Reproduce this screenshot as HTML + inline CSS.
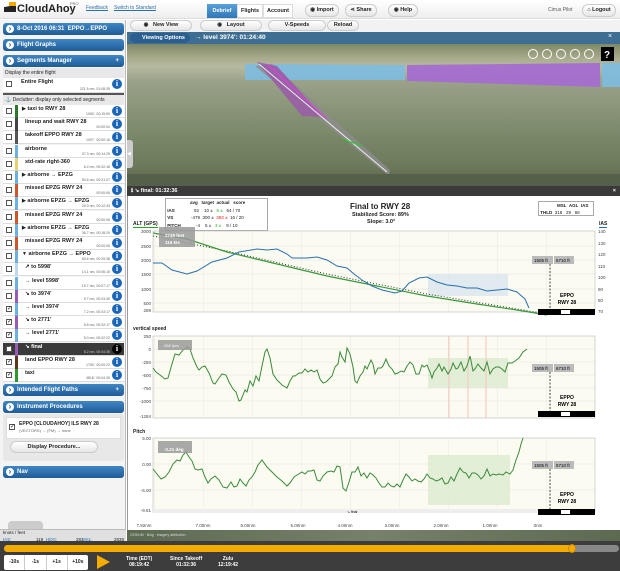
<!DOCTYPE html>
<html><head><meta charset="utf-8"><style>
*{box-sizing:border-box;margin:0;padding:0}
body{width:620px;height:571px;overflow:hidden;background:#fff;font-family:"Liberation Sans",sans-serif;font-size:6px;color:#222;position:relative}
.a{position:absolute}
.bar{position:absolute;left:3px;width:121px;height:12px;border-radius:3px;background:linear-gradient(#3f86c4,#1f5c97);color:#fff;font-weight:bold;font-size:6px;line-height:12px;padding-left:14px}
.bar:before{content:"›";position:absolute;left:3px;top:2px;width:8px;height:8px;border-radius:50%;background:#fff;color:#1f5c97;font-size:8px;line-height:7px;text-align:center}
.row{position:absolute;left:3px;width:121px;height:13px;border-bottom:1px solid #ddd;background:#fff}
.row .cb{position:absolute;left:3px;top:3px;width:6px;height:6px;border:1px solid #555;background:#fff;font-size:6px;line-height:5px}
.row .c{position:absolute;left:12px;top:0;width:3px;height:13px}
.row .t{position:absolute;left:22px;top:1px;font-size:5.5px;font-weight:bold}
.row .s{position:absolute;right:14px;bottom:1px;font-size:3.5px;color:#666}
.row .i{position:absolute;right:2px;top:1px;width:10px;height:10px;border-radius:50%;background:#1a66b8;color:#fff;font:bold 8px "Liberation Serif",serif;text-align:center;line-height:10px}
.btn{position:absolute;height:11px;border:1px solid #ccc;border-radius:6px;background:linear-gradient(#fff,#e6e6e6);font-size:5.5px;font-weight:bold;line-height:9px;text-align:center}
.ax{font-size:4.5px;fill:#444}
</style></head><body>
<div class="a" style="left:0;top:0;width:620px;height:19px;background:linear-gradient(#fff,#eee);border-bottom:1px solid #ddd"></div>
<div class="a" style="left:4px;top:5px;width:12px;height:7px;background:#222;clip-path:polygon(0 30%,100% 0,100% 100%,0 100%)"></div>
<div class="a" style="left:9px;top:2px;width:7px;height:4px;background:#f5a800"></div>
<div class="a" style="left:17px;top:3px;font-size:11px;font-weight:bold;color:#222">CloudAhoy</div>
<div class="a" style="left:70px;top:1px;font-size:4px;color:#666">PRO</div>
<div class="a" style="left:86px;top:5px;font-size:5px;color:#2a6fb0;text-decoration:underline">Feedback</div>
<div class="a" style="left:114px;top:5px;font-size:5px;color:#2a6fb0;text-decoration:underline">Switch to Standard</div>
<div class="a" style="left:207px;top:4px;width:30px;height:14px;background:linear-gradient(#5aa0d8,#2f78b8);color:#fff;font-size:5.5px;font-weight:bold;text-align:center;line-height:14px">Debrief</div>
<div class="a" style="left:237px;top:4px;width:26px;height:14px;background:#fff;border:1px solid #ddd;font-size:5.5px;font-weight:bold;text-align:center;line-height:12px">Flights</div>
<div class="a" style="left:263px;top:4px;width:30px;height:14px;background:#fff;border:1px solid #ddd;font-size:5.5px;font-weight:bold;text-align:center;line-height:12px">Account</div>
<div class="btn" style="left:305px;top:4px;width:34px;height:13px;line-height:11px">◉ Import</div>
<div class="btn" style="left:345px;top:4px;width:32px;height:13px;line-height:11px">⋖ Share</div>
<div class="btn" style="left:388px;top:4px;width:30px;height:13px;line-height:11px">◉ Help</div>
<div class="a" style="left:548px;top:7px;font-size:5px;color:#555">Cirrus Pilot</div>
<div class="btn" style="left:582px;top:4px;width:34px;height:13px;line-height:11px">⌂ Logout</div>
<div class="a" style="left:0;top:20px;width:126px;height:521px;background:#f4f4f4;border-right:1px solid #bbb"></div>
<div class="bar" style="top:23px">8-Oct 2016 06:31 &nbsp;EPPO→EPPO</div>
<div class="bar" style="top:39px">Flight Graphs</div>
<div class="bar" style="top:55px">Segments Manager<span style="position:absolute;right:5px">+</span></div>
<div class="a" style="left:3px;top:68px;width:121px;height:10px;background:#e8e8e8;font-size:5px;padding:2px">Display the entire flight</div>
<div class="row" style="top:78px;height:15px"><div class="cb"></div><div class="t" style="left:18px">Entire Flight</div><div class="s">221.5 nm, 01:08:35</div><div class="i">i</div></div>
<div class="a" style="left:3px;top:93px;width:121px;height:2px;background:#555"></div>
<div class="a" style="left:3px;top:95px;width:121px;height:10px;background:#e8e8e8;font-size:5px;padding:2px">⚓ Declutter: display only selected segments</div>
<div id="rows"></div>
<div class="bar" style="top:384px">Intended Flight Paths<span style="position:absolute;right:5px">+</span></div>
<div class="bar" style="top:401px">Instrument Procedures</div>
<div class="a" style="left:3px;top:414px;width:121px;height:47px;background:#e8e8e8;border-radius:3px"></div>
<div class="a" style="left:6px;top:417px;width:115px;height:22px;background:#fff;border:1px solid #ddd"></div>
<div class="a" style="left:9px;top:424px;width:6px;height:6px;border:1px solid #555;font-size:6px;line-height:5px">✓</div>
<div class="a" style="left:19px;top:421px;font-size:5px;font-weight:bold">EPPO [CLOUDAHOY] ILS RWY 28</div>
<div class="a" style="left:19px;top:428px;font-size:4px;color:#666">(VECTORS) → (FM) → none</div>
<div class="btn" style="left:10px;top:441px;width:88px;height:12px;line-height:10px">Display Procedure...</div>
<div class="bar" style="top:466px">Nav</div>
<div class="a" style="left:8px;top:521px;width:35px;height:8px;background:#ccc;border-radius:4px 4px 0 0"></div>
<div class="a" style="left:0;top:529px;width:126px;height:12px;background:#e0e0e0;border-top:1px solid #bbb"></div>
<div class="a" style="left:3px;top:530px;font-size:4.5px">knots / feet</div>
<div class="a" style="left:3px;top:537px;font-size:4.5px;width:122px"><span style="color:#2a6fb0">IAS:</span><span style="position:absolute;left:33px">119</span><span style="position:absolute;left:43px;color:#2a6fb0">HDG:</span><span style="position:absolute;left:73px">283</span><span style="position:absolute;left:79px;color:#2a6fb0">MSL:</span><span style="position:absolute;left:111px">2838</span></div>
<div class="a" style="left:127px;top:20px;width:493px;height:12px;background:#f2f2f2"></div>
<div class="btn" style="left:130px;top:20px;width:62px">◉ &nbsp;&nbsp;New View</div>
<div class="btn" style="left:200px;top:20px;width:62px">◉ &nbsp;&nbsp;Layout</div>
<div class="btn" style="left:268px;top:20px;width:58px">V-Speeds</div>
<div class="btn" style="left:327px;top:20px;width:32px">Reload</div>
<div class="a" style="left:127px;top:32px;width:493px;height:12px;background:#3e6f92"></div>
<div class="a" style="left:130px;top:33px;width:60px;height:10px;border-radius:5px;background:#2b5f8f;color:#fff;font-size:5.5px;font-weight:bold;line-height:10px;padding-left:12px">Viewing Options</div>
<div class="a" style="left:195px;top:34px;color:#fff;font-size:6.5px;font-weight:bold">→ level 3974': 01:24:40</div>
<div class="a" style="left:608px;top:33px;color:#fff;font-size:7px">×</div>
<div class="a" style="left:127px;top:44px;width:493px;height:142px;background:linear-gradient(#7e8868 0%,#a8ab8c 10%,#b6b99f 16%,#9aa28a 26%,#8a9578 45%,#7a8769 65%,#6d7a5c 85%,#5c6449 100%)"></div>
<svg class="a" style="left:127px;top:44px" width="493" height="142">
<polygon points="118,20 278,21 278,36 118,36" fill="#7dbce0" opacity=".9"/>
<polygon points="280,21 473,19 473,43 280,37" fill="#a56bd0" opacity=".92"/>
<polygon points="475,19 493,19 493,43 475,43" fill="#7dbce0" opacity=".9"/>
<polygon points="128,22 145,20 263,126 262,132" fill="#8c8c8c" opacity=".85"/>
<polygon points="130,18 150,22 196,73 175,72" fill="#9a5ba8" opacity=".85"/>
<line x1="132" y1="20" x2="260" y2="128" stroke="#eee" stroke-width="1"/>
<line x1="140" y1="20" x2="200" y2="75" stroke="#e040e0" stroke-width="1"/>
<line x1="215" y1="95" x2="235" y2="102" stroke="#2c2" stroke-width="1"/>
<g fill="none" stroke="#fff" stroke-width="1"><circle cx="406" cy="10" r="4.5"/><circle cx="420" cy="10" r="4.5"/><circle cx="434" cy="10" r="4.5"/><circle cx="448" cy="10" r="4.5"/><circle cx="462" cy="10" r="4.5"/></g>
<rect x="474" y="3" width="13" height="14" fill="#000"/><text x="477" y="14" fill="#fff" font-size="10" font-weight="bold">?</text>
<rect x="0" y="130" width="493" height="12" fill="#55604a"/>
</svg>
<div class="a" style="left:127px;top:186px;width:493px;height:10px;background:#3a3a3a;color:#fff;font-size:5.5px;font-weight:bold;line-height:10px;padding-left:4px">ℹ ↘ final: 01:32:36<span style="position:absolute;right:4px">×</span></div>
<div class="a" style="left:127px;top:196px;width:493px;height:334px;background:#fff;border-left:1px solid #999"></div>
<div class="a" style="left:165px;top:198px;width:103px;height:33px;border:1px solid #aaa;font-size:4.5px;line-height:7.5px">
<div style="padding-left:24px;font-weight:bold">avg &nbsp;&nbsp;target &nbsp;actual &nbsp;&nbsp;score</div>
<div><b>&nbsp;IAS</b><span style="position:absolute;left:28px">92 &nbsp;&nbsp;&nbsp;10 ± &nbsp;&nbsp;<span style="color:#2a2">6 ±</span> &nbsp;&nbsp;64 / 70</span></div>
<div><b>&nbsp;VS</b><span style="position:absolute;left:25px">-479 &nbsp;300 ± &nbsp;<span style="color:#d22">393 ±</span> &nbsp;16 / 20</span></div>
<div><b>&nbsp;PITCH</b><span style="position:absolute;left:30px">-4 &nbsp;&nbsp;&nbsp;5 ± &nbsp;&nbsp;<span style="color:#2a2">3 ±</span> &nbsp;&nbsp;&nbsp;9 / 10</span></div>
</div>
<div class="a" style="left:350px;top:202px;font-size:8px;font-weight:bold">Final to RWY 28</div>
<div class="a" style="left:352px;top:212px;font-size:5.5px;font-weight:bold">Stabilized Score: 89%</div>
<div class="a" style="left:367px;top:219px;font-size:5.5px;font-weight:bold">Slope: 3.0°</div>
<div class="a" style="left:538px;top:201px;width:56px;height:15px;border:1px solid #aaa;font-size:4.5px;line-height:7px"><div style="padding-left:18px;font-weight:bold">MSL &nbsp;AGL &nbsp;IAS</div><div><b>&nbsp;THLD</b> &nbsp;318 &nbsp;&nbsp;29 &nbsp;&nbsp;66</div></div>
<div class="a" style="left:133px;top:221px;font-size:5px;font-weight:bold;border-bottom:1px solid #2a2">ALT (GPS)</div>
<div class="a" style="left:599px;top:221px;font-size:5px;font-weight:bold;border-bottom:1px solid #2a6fb0">IAS</div>
<div class="a" style="left:133px;top:326px;font-size:5px;font-weight:bold">vertical speed</div>
<div class="a" style="left:133px;top:429px;font-size:5px;font-weight:bold">Pitch</div>
<svg class="a" style="left:127px;top:196px" width="493" height="334">
<defs><pattern id="g" width="49" height="400" patternUnits="userSpaceOnUse" x="-22"><line x1="0" y1="0" x2="0" y2="400" stroke="#ddd" stroke-width=".6"/></pattern></defs>
<rect x="26" y="35" width="442" height="81" fill="#fbfbf1" stroke="#bbb" stroke-width=".6"/>
<rect x="26" y="35" width="442" height="81" fill="url(#g)"/>
<g stroke="#e4e4e4" stroke-width=".6"><line x1="26" y1="50" x2="468" y2="50"/><line x1="26" y1="64" x2="468" y2="64"/><line x1="26" y1="78" x2="468" y2="78"/><line x1="26" y1="93" x2="468" y2="93"/><line x1="26" y1="107" x2="468" y2="107"/></g>
<rect x="301" y="78" width="80" height="22" fill="#d9e6ef" opacity=".8"/>
<g class="ax" text-anchor="end"><text x="24" y="37">3000</text><text x="24" y="52">2500</text><text x="24" y="66">2000</text><text x="24" y="80">1500</text><text x="24" y="95">1000</text><text x="24" y="109">500</text><text x="24" y="116">289</text></g>
<g class="ax"><text x="471" y="37">140</text><text x="471" y="49">130</text><text x="471" y="60">120</text><text x="471" y="72">110</text><text x="471" y="83">100</text><text x="471" y="95">90</text><text x="471" y="106">80</text><text x="471" y="117">70</text></g>
<polyline points="26,40 100,55 200,78 300,98 420,118" stroke="#333" stroke-dasharray="1,2" fill="none"/>
<polyline points="26,37 60,43 100,56 150,68 200,80 250,90 300,100 350,108 390,114 420,119" stroke="#3a9a3a" stroke-width="1.2" fill="none"/>
<polyline points="26,67 35,67 45,74 60,78 70,75 85,66 100,62 112,56 130,53 140,54 150,53 160,58 165,62 180,62 190,61 200,64 210,70 220,72 227,78 235,84 245,90 255,94 268,97 275,95 282,87 292,82 300,81 310,86 320,89 330,90 340,92 350,92 360,95 370,94 380,93 390,96 398,103 402,112" stroke="#2a6fb0" stroke-width="1" fill="none"/>
<rect x="32" y="31" width="36" height="20" fill="#999" opacity=".85"/><text x="38" y="41" fill="#fff" font-size="4.5" font-weight="bold">2749 feet</text><text x="38" y="48" fill="#fff" font-size="4.5" font-weight="bold">119 kts</text>
<rect x="405" y="60" width="21" height="8" fill="#bbb"/><text x="407" y="66" font-size="4.5">1505 ft</text><rect x="427" y="60" width="20" height="8" fill="#bbb"/><text x="429" y="66" font-size="4.5">6710 ft</text>
<line x1="423" y1="68" x2="423" y2="116" stroke="#444" stroke-dasharray="2,1.5"/>
<text x="440" y="101" font-size="5" font-weight="bold" text-anchor="middle">EPPO</text><text x="440" y="108" font-size="5" font-weight="bold" text-anchor="middle">RWY 28</text>
<rect x="411" y="113" width="57" height="6" fill="#000"/><rect x="434" y="114" width="9" height="4" fill="#fff"/>
<rect x="26" y="140" width="442" height="82" fill="#fbfbf1" stroke="#bbb" stroke-width=".6"/>
<rect x="26" y="140" width="442" height="82" fill="url(#g)"/>
<g stroke="#e4e4e4" stroke-width=".6"><line x1="26" y1="153" x2="468" y2="153"/><line x1="26" y1="166" x2="468" y2="166"/><line x1="26" y1="179" x2="468" y2="179"/><line x1="26" y1="192" x2="468" y2="192"/><line x1="26" y1="205" x2="468" y2="205"/></g>
<rect x="301" y="162" width="80" height="30" fill="#dcebd0" opacity=".8"/>
<g stroke="#f5c6c0" stroke-width="1"><line x1="322" y1="140" x2="322" y2="222"/><line x1="341" y1="140" x2="341" y2="222"/><line x1="359" y1="140" x2="359" y2="222"/></g>
<g class="ax" text-anchor="end"><text x="24" y="142">250</text><text x="24" y="155">0</text><text x="24" y="168">-250</text><text x="24" y="181">-500</text><text x="24" y="194">-750</text><text x="24" y="207">-1000</text><text x="24" y="222">-1284</text></g>
<polyline points="26,172 29,176 33,179 38,183 41,182 45,168 48,158 52,159 56,154 60,151 63,153 66,162 70,171 72,174 75,171 78,170 82,177 86,187 88,188 92,182 95,178 99,179 102,186 106,193 109,196 112,205 114,204 118,194 120,196 123,185 126,190 129,180 132,185 135,170 138,156 140,153 143,162 146,178 150,184 155,189 160,192 163,185 166,180 168,180 172,177 175,177 178,173 181,176 184,174 187,176 190,174 193,183 196,187 199,186 202,183 205,180 208,171 211,168 213,156 215,161 218,166 220,152 223,158 226,171 228,185 230,187 233,180 236,176 238,170 240,173 244,164 246,168 248,178 251,172 254,172 256,170 259,163 262,170 265,173 268,178 271,177 274,175 277,176 280,170 283,166 286,169 289,178 292,178 295,169 297,171 300,169 303,176 305,182 307,176 310,172 312,168 315,175 317,171 321,178 324,173 326,167 329,173 331,172 334,166 337,175 340,170 343,160 346,175 348,173 351,168 354,172 357,175 360,166 363,178 366,173 369,171 372,171 375,173 378,176 381,167 385,167 388,165 392,162 396,156 400,153" stroke="#3a8a3a" stroke-width="1" fill="none"/>
<rect x="31" y="144" width="34" height="10" fill="#999" opacity=".85"/><text x="36" y="151" fill="#fff" font-size="4">-502 fpm</text>
<rect x="405" y="168" width="21" height="8" fill="#bbb"/><text x="407" y="174" font-size="4.5">1505 ft</text><rect x="427" y="168" width="20" height="8" fill="#bbb"/><text x="429" y="174" font-size="4.5">6710 ft</text>
<line x1="423" y1="176" x2="423" y2="220" stroke="#444" stroke-dasharray="2,1.5"/>
<text x="440" y="203" font-size="5" font-weight="bold" text-anchor="middle">EPPO</text><text x="440" y="210" font-size="5" font-weight="bold" text-anchor="middle">RWY 28</text>
<rect x="411" y="215" width="57" height="6" fill="#000"/><rect x="434" y="216" width="9" height="4" fill="#fff"/>
<rect x="26" y="242" width="442" height="74" fill="#fbfbf1" stroke="#bbb" stroke-width=".6"/>
<rect x="26" y="242" width="442" height="74" fill="url(#g)"/>
<g stroke="#e4e4e4" stroke-width=".6"><line x1="26" y1="268" x2="468" y2="268"/><line x1="26" y1="294" x2="468" y2="294"/></g>
<rect x="301" y="259" width="82" height="50" fill="#dcebd0" opacity=".8"/>
<rect x="26" y="313" width="385" height="4" fill="#eee"/><text x="220" y="317" font-size="3.5">↘ final</text>
<g class="ax" text-anchor="end"><text x="24" y="244">5.00</text><text x="24" y="270">0.00</text><text x="24" y="296">-5.00</text><text x="24" y="316">-9.81</text></g>
<polyline points="26,273 30,278 34,283 38,281 42,276 46,268 50,264 53,265 56,259 59,256 62,261 65,265 68,273 71,274 75,273 78,281 81,287 84,283 88,280 92,284 96,291 100,292 104,286 107,291 110,290 113,283 116,287 119,290 122,284 125,281 128,276 131,269 135,264 140,271 145,276 150,281 155,285 160,290 163,287 167,281 170,279 175,276 178,278 181,275 184,275 187,274 190,284 193,285 196,280 200,276 204,275 207,276 210,270 213,271 216,292 219,295 222,286 225,276 228,276 231,271 234,280 237,277 240,282 243,277 246,279 249,282 252,287 255,291 258,291 261,287 264,290 267,291 270,288 273,291 276,284 279,278 282,281 285,285 288,283 291,285 294,286 297,283 300,278 303,282 306,283 309,285 312,284 315,282 318,288 321,287 324,281 327,285 330,278 333,272 336,276 339,277 342,282 345,277 348,277 351,279 354,283 357,280 360,273 363,280 366,278 369,279 372,278 376,279 379,276 383,278 386,274 389,264 392,256 394,248 396,242" stroke="#3a8a3a" stroke-width="1" fill="none"/>
<rect x="31" y="245" width="34" height="12" fill="#999" opacity=".85"/><text x="37" y="255" fill="#fff" font-size="4.5" font-weight="bold">-2.21 deg</text>
<rect x="405" y="265" width="21" height="8" fill="#bbb"/><text x="407" y="271" font-size="4.5">1505 ft</text><rect x="427" y="265" width="20" height="8" fill="#bbb"/><text x="429" y="271" font-size="4.5">6710 ft</text>
<line x1="423" y1="273" x2="423" y2="313" stroke="#444" stroke-dasharray="2,1.5"/>
<text x="440" y="300" font-size="5" font-weight="bold" text-anchor="middle">EPPO</text><text x="440" y="307" font-size="5" font-weight="bold" text-anchor="middle">RWY 28</text>
<rect x="411" y="313" width="57" height="6" fill="#000"/><rect x="434" y="314" width="9" height="4" fill="#fff"/>
<g class="ax" text-anchor="middle"><text x="17" y="331">7.92nm</text><text x="76" y="331">7.00nm</text><text x="121" y="331">6.00nm</text><text x="171" y="331">5.00nm</text><text x="218" y="331">4.00nm</text><text x="265" y="331">3.00nm</text><text x="314" y="331">2.00nm</text><text x="363" y="331">1.00nm</text><text x="411" y="331">0nm</text></g>
</svg>
<div class="a" style="left:127px;top:530px;width:493px;height:11px;background:linear-gradient(90deg,#5d6a52,#77806a,#5d6a52);"></div>
<div class="a" style="left:130px;top:533px;font-size:3.5px;color:#ddd">CESIUM · Bing · imagery attribution</div>
<div class="a" style="left:0;top:541px;width:620px;height:30px;background:#3d3d3d"></div>
<div class="a" style="left:4px;top:545px;width:615px;height:7px;border-radius:4px;background:#888"></div>
<div class="a" style="left:4px;top:545px;width:568px;height:7px;border-radius:4px;background:#f5ac00"></div>
<div class="a" style="left:568px;top:544px;width:8px;height:9px;border-radius:50%;background:#f5ac00;border:1px solid #c80"></div>
<div class="a" style="left:4px;top:555px;width:84px;height:15px;background:#fff;border-radius:2px;font-size:5px;font-weight:bold;display:flex"><span style="flex:1;text-align:center;line-height:15px;border-right:1px solid #ccc">-10s</span><span style="flex:1;text-align:center;line-height:15px;border-right:1px solid #ccc">-1s</span><span style="flex:1;text-align:center;line-height:15px;border-right:1px solid #ccc">+1s</span><span style="flex:1;text-align:center;line-height:15px">+10s</span></div>
<div class="a" style="left:97px;top:555px;width:0;height:0;border-left:13px solid #f5ac00;border-top:7px solid transparent;border-bottom:7px solid transparent"></div>
<div class="a" style="left:126px;top:556px;color:#fff;font-size:5px;font-weight:bold;text-align:center;line-height:6px">Time (EDT)<br>08:19:42</div>
<div class="a" style="left:170px;top:556px;color:#fff;font-size:5px;font-weight:bold;text-align:center;line-height:6px">Since Takeoff<br>01:32:36</div>
<div class="a" style="left:218px;top:556px;color:#fff;font-size:5px;font-weight:bold;text-align:center;line-height:6px">Zulu<br>12:19:42</div>
<div class="a" style="left:127px;top:140px;width:6px;height:28px;background:#ccc;border-radius:0 3px 3px 0;font-size:5px;color:#fff;line-height:28px">◀</div>
<script>
var R=[["taxi to RWY 28","1060', 00:15:59","#2a7a2a","▶"],["lineup and wait RWY 28","00:00:04","#444",""],["takeoff EPPO RWY 28","1097', 00:00:16","#555",""],["airborne","37.3 nm, 00:14:29","#6ab0e0",""],["std-rate right-360","6.2 nm, 00:02:18","#e8d070",""],["airborne → EPZG","50.6 nm, 00:21:07","#6ab0e0","▶"],["missed EPZG RWY 24","00:00:06","#d0552a",""],["airborne EPZG → EPZG","29.0 nm, 00:12:43","#6ab0e0","▶"],["missed EPZG RWY 24","00:00:06","#d0552a",""],["airborne EPZG → EPZG","36.7 nm, 00:18:29","#6ab0e0","▶"],["missed EPZG RWY 24","00:00:06","#d0552a",""],["airborne EPZG → EPPO","69.6 nm, 00:29:38","#6ab0e0","▼"],["↗ to 5998'","14.1 nm, 00:06:15","#bcd8ec",""],["→ level 5998'","19.7 nm, 00:07:17","#6ab0e0",""],["↘ to 3974'","9.7 nm, 00:03:35","#9a5ab8",""],["→ level 3974'","7.2 nm, 00:03:17","#6ab0e0",""],["↘ to 2771'","5.6 nm, 00:02:17","#9a5ab8",""],["→ level 2771'","5.0 nm, 00:02:22","#6ab0e0",""],["↘ final","8.2 nm, 00:04:35","#9a5ab8",""],["land EPPO RWY 28","1750', 00:00:22","#5a3a1a",""],["taxi","4818', 00:04:39","#2a9a2a",""]];
var h="";R.forEach(function(r,i){var y=105+i*13.2,ck=i>=15,d=i==18;h+='<div class="row" style="top:'+y+'px;'+(d?'background:#3a3a3a;color:#fff':'')+'"><div class="cb">'+(ck?'✓':'')+'</div><div class="c" style="background:'+r[2]+'"></div><div class="t"'+(r[3]?' style="left:19px"':'')+'>'+(r[3]?'<span style="font-size:5px">'+r[3]+'</span> ':'')+r[0]+'</div><div class="s"'+(d?' style="color:#ccc"':'')+'>'+r[1]+'</div><div class="i"'+(d?' style="background:#000"':'')+'>i</div></div>'});
document.getElementById("rows").innerHTML=h;
</script>
</body></html>
